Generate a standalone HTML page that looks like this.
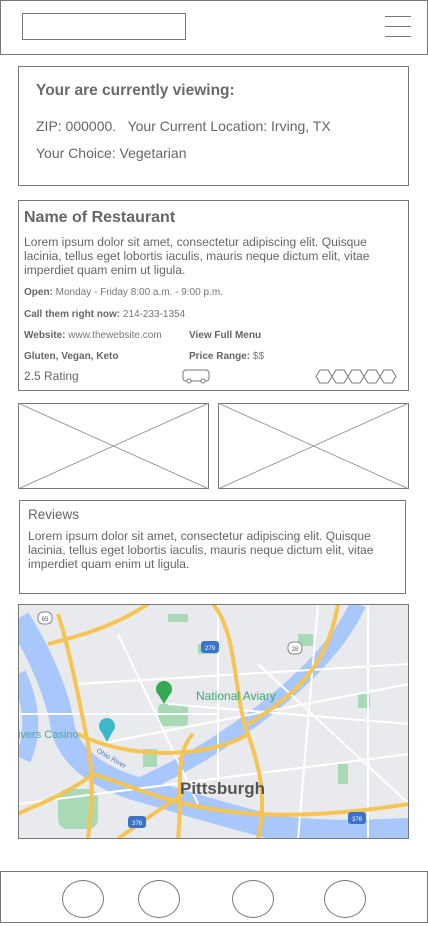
<!DOCTYPE html>
<html><head><meta charset="utf-8"><style>
*{margin:0;padding:0;box-sizing:border-box}
body{width:428px;height:926px;background:#fff;font-family:"Liberation Sans",Arial,sans-serif;color:#666;position:relative;overflow:hidden}
.a{position:absolute}
.box{position:absolute;border:1px solid #777}
.t{position:absolute;white-space:nowrap}
.sm{font-size:10px;color:#777}
.sm b{color:#666}
</style></head><body>
<div class="box" style="left:0;top:0;width:428px;height:55px"></div>
<div class="box" style="left:22px;top:13px;width:164px;height:27px"></div>
<div class="a" style="left:385px;top:16px;width:26px;height:1px;background:#777"></div>
<div class="a" style="left:385px;top:26px;width:26px;height:1px;background:#777"></div>
<div class="a" style="left:385px;top:36px;width:26px;height:1px;background:#777"></div>

<div class="box" style="left:18px;top:66px;width:391px;height:120px"></div>
<div class="t" style="left:36px;top:82px;font-size:15.5px;font-weight:bold;color:#6a6a6a">Your are currently viewing:</div>
<div class="t" style="left:36px;top:118px;font-size:14px">ZIP: 000000. &nbsp; Your Current Location: Irving, TX</div>
<div class="t" style="left:36px;top:145px;font-size:14px">Your Choice: Vegetarian</div>

<div class="box" style="left:18px;top:200px;width:391px;height:191px"></div>
<div class="t" style="left:24px;top:209px;font-size:16px;font-weight:bold">Name of Restaurant</div>
<div class="t" style="left:24px;top:235px;font-size:12.1px;line-height:14px;color:#666">Lorem ipsum dolor sit amet, consectetur adipiscing elit. Quisque<br>lacinia, tellus eget lobortis iaculis, mauris neque dictum elit, vitae<br>imperdiet quam enim ut ligula.</div>
<div class="t sm" style="left:24px;top:287px"><b>Open:</b> Monday - Friday 8:00 a.m. - 9:00 p.m.</div>
<div class="t sm" style="left:24px;top:309px"><b>Call them right now:</b> 214-233-1354</div>
<div class="t sm" style="left:24px;top:330px"><b>Website:</b> www.thewebsite.com</div>
<div class="t sm" style="left:189px;top:330px"><b>View Full Menu</b></div>
<div class="t sm" style="left:24px;top:351px"><b>Gluten, Vegan, Keto</b></div>
<div class="t sm" style="left:189px;top:351px"><b>Price Range:</b> $$</div>
<div class="t" style="left:24px;top:369px;font-size:12px">2.5 Rating</div>
<svg class="a" style="left:182px;top:368px" width="28" height="16" viewBox="0 0 28 16"><path d="M4 2h20a3 3 0 0 1 3 3v5a3 3 0 0 1-3 3h-1M5 13H4a3 3 0 0 1-3-3V5a3 3 0 0 1 3-3M9 13h10" fill="none" stroke="#777" stroke-width="1"/><circle cx="7" cy="13" r="2" fill="none" stroke="#777"/><circle cx="21" cy="13" r="2" fill="none" stroke="#777"/></svg>
<svg class="a" style="left:315px;top:369px" width="82" height="15" viewBox="0 0 82 15"><g fill="none" stroke="#777" stroke-width="1"><path d="M1 7.5L5 1h8l4 6.5L13 14H5z"/><path d="M17 7.5L21 1h8l4 6.5L29 14h-8z"/><path d="M33 7.5L37 1h8l4 6.5L45 14h-8z"/><path d="M49 7.5L53 1h8l4 6.5L61 14h-8z"/><path d="M65 7.5L69 1h8l4 6.5L77 14h-8z"/></g></svg>

<svg class="a" style="left:18px;top:403px" width="191" height="86"><rect x=".5" y=".5" width="190" height="85" fill="none" stroke="#777"/><path d="M0 0L191 86M191 0L0 86" stroke="#888" stroke-width=".8"/></svg>
<svg class="a" style="left:218px;top:403px" width="191" height="86"><rect x=".5" y=".5" width="190" height="85" fill="none" stroke="#777"/><path d="M0 0L191 86M191 0L0 86" stroke="#888" stroke-width=".8"/></svg>

<div class="box" style="left:19px;top:500px;width:387px;height:94px"></div>
<div class="t" style="left:28px;top:507px;font-size:13.5px">Reviews</div>
<div class="t" style="left:28px;top:529px;font-size:12.1px;line-height:14px">Lorem ipsum dolor sit amet, consectetur adipiscing elit. Quisque<br>lacinia, tellus eget lobortis iaculis, mauris neque dictum elit, vitae<br>imperdiet quam enim ut ligula.</div>

<svg class="a" style="left:18px;top:604px" width="391" height="235" viewBox="0 0 391 235">
<rect width="391" height="235" fill="#e8eaed"/>
<path d="M0 15C20 45 40 90 45 125 55 160 90 178 130 188 170 200 210 212 250 222 300 230 340 228 391 226" fill="none" stroke="#a8c7fa" stroke-width="24"/>
<path d="M0 70C12 95 18 125 5 155" fill="none" stroke="#a8c7fa" stroke-width="16"/>
<path d="M340 0C320 45 275 85 235 115 200 140 170 160 125 180" fill="none" stroke="#a8c7fa" stroke-width="16"/>
<g fill="#a8dab5"><rect x="140" y="100" width="30" height="22" rx="4"/><rect x="125" y="145" width="14" height="18"/><rect x="180" y="40" width="20" height="10"/><rect x="280" y="30" width="15" height="12"/><rect x="340" y="90" width="12" height="14"/><rect x="320" y="160" width="10" height="20"/><rect x="40" y="185" width="40" height="40" rx="10"/><rect x="150" y="10" width="20" height="8"/></g>
<g fill="none" stroke="#fff" stroke-width="2"><path d="M0 110H200M60 80L390 60M80 140L391 80M200 0V180M240 60L391 200M100 30L180 200M300 0L280 235M0 200L391 150M350 0V235M150 100L391 120"/></g>
<g fill="none" stroke="#f6c453" stroke-width="4"><path d="M40 10C50 40 60 90 70 140 75 170 75 195 70 235"/><path d="M195 0C220 30 215 90 230 130 240 160 250 190 240 235"/><path d="M60 130C120 160 200 150 230 130"/><path d="M230 120C280 90 310 60 320 0"/><path d="M175 130C155 150 165 190 160 235"/><path d="M75 170C140 190 200 230 391 200"/><path d="M0 210C20 200 50 190 75 170M100 235C120 220 150 200 165 190"/><path d="M30 40C70 30 100 20 130 0"/></g>
<text x="0" y="134" font-family="Liberation Sans,sans-serif" font-size="11" fill="#4fa3a8">ivers Casino</text>
<text x="178" y="96" font-family="Liberation Sans,sans-serif" font-size="12" fill="#3fa86a">National Aviary</text>
<text x="162" y="190" font-family="Liberation Sans,sans-serif" font-size="17" font-weight="bold" fill="#555">Pittsburgh</text>
<text x="78" y="148" font-family="Liberation Sans,sans-serif" font-size="7" fill="#4a78c0" transform="rotate(30 78 148)">Ohio River</text>
<circle cx="146" cy="85" r="8" fill="#34a853"/><path d="M140 90L146 100 152 90z" fill="#34a853"/>
<circle cx="89" cy="122" r="8" fill="#3db8c8"/><path d="M83 127L89 138 95 127z" fill="#3db8c8"/>
<g font-family="Liberation Sans,sans-serif" font-size="6" text-anchor="middle"><rect x="183" y="37" width="18" height="12" rx="3" fill="#3b73c8"/><text x="192" y="46" fill="#fff">279</text><rect x="110" y="212" width="18" height="12" rx="3" fill="#3b73c8"/><text x="119" y="221" fill="#fff">376</text><rect x="330" y="208" width="18" height="12" rx="3" fill="#3b73c8"/><text x="339" y="217" fill="#fff">376</text><rect x="270" y="38" width="14" height="12" rx="5" fill="#fff" stroke="#888"/><text x="277" y="47" fill="#555">28</text><rect x="20" y="8" width="14" height="12" rx="5" fill="#fff" stroke="#888"/><text x="27" y="17" fill="#555">65</text></g>
<rect x=".5" y=".5" width="390" height="234" fill="none" stroke="#777"/>
</svg>

<div class="box" style="left:0;top:871px;width:428px;height:52px"></div>
<div class="box" style="left:62px;top:880px;width:42px;height:38px;border-radius:50%"></div>
<div class="box" style="left:138px;top:880px;width:42px;height:38px;border-radius:50%"></div>
<div class="box" style="left:232px;top:880px;width:42px;height:38px;border-radius:50%"></div>
<div class="box" style="left:324px;top:880px;width:42px;height:38px;border-radius:50%"></div>
</body></html>
